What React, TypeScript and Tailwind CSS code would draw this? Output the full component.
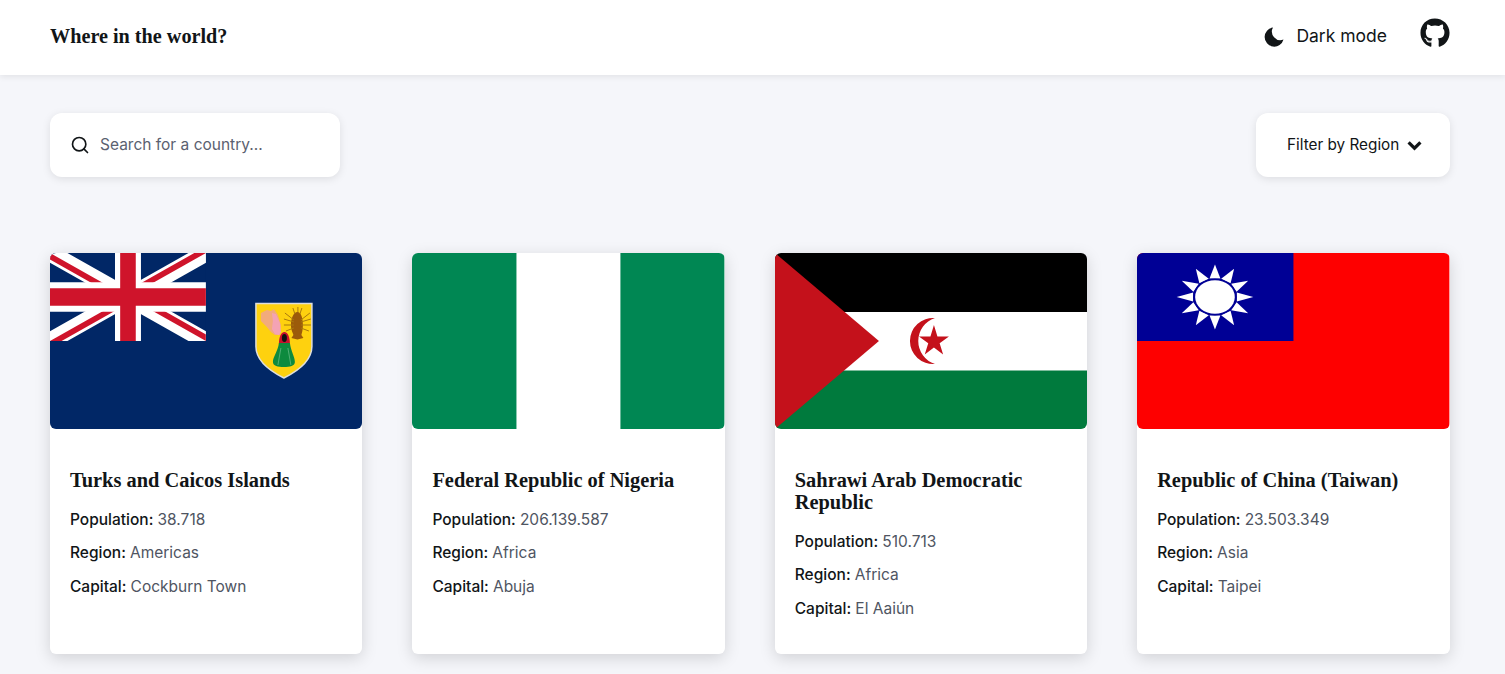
import { Search } from 'lucide-react';
import { FaGithub } from 'react-icons/fa';

const SERIF = "font-['Liberation_Serif',serif]";

function TurksFlag() {
  return (
    <svg viewBox="0 0 312.5 176" className="block w-full h-[176px]" preserveAspectRatio="none">
      <rect width="312.5" height="176" fill="#012766" />
      <svg x="0" y="0" width="156" height="88" viewBox="0 0 60 30" preserveAspectRatio="none">
        <clipPath id="canton">
          <path d="M30 15h30v15zv15h-30zh-30v-15zv-15h30z" />
        </clipPath>
        <path d="M0 0h60v30H0z" fill="#012766" />
        <path d="M0 0l60 30m0-30L0 30" stroke="#fff" strokeWidth="6" />
        <path d="M0 0l60 30m0-30L0 30" stroke="#cf142b" strokeWidth="4" clipPath="url(#canton)" />
        <path d="M30 0v30M0 15h60" stroke="#fff" strokeWidth="10" />
        <path d="M30 0v30M0 15h60" stroke="#cf142b" strokeWidth="6" />
      </svg>
      <path d="M206 50.500h56v43c0 14-13 24-28 31.500c-15-7.500-28-17.500-28-31.500z" fill="#fed10f" stroke="#ddd" strokeWidth="1.500" />
      {/* conch */}
      <path d="M211 60l6-3l4 1l3-2l4 6l3 10l-1 10l-5 0l-4-3l-4-5l-6-6z" fill="#f2ab7c" />
      <path d="M222 60l4 1l4 9l1 9l-2 3l-4-1l-3-5l1-8z" fill="#f4a3b4" />
      {/* lobster */}
      <path d="M247.500 59c4 0 5.500 7 5.500 13c0 5-1 8-1.500 10l2 3l-6 1.500l-6-1.500l2-3c-.5-2-2.500-5-2.500-10c0-6 2.500-13 6.500-13z" fill="#9c5b0a" />
      <path d="M235 60l9 7M234 66l10 3M234 72l10 0M236 78l8-3M260 60l-9 7M261 66l-10 3M261 72l-10 0M259 78l-8-3M243 55l2 6M248 54v5M252 55l-2 6" stroke="#a9780e" strokeWidth="1" fill="none" />
      {/* cactus */}
      <path d="M229 91c0-7 2-12 5.500-12s5.500 5 5.500 12z" fill="#c8102e" />
      <ellipse cx="234.500" cy="85" rx="2.500" ry="4" fill="#111" />
      <path d="M229 90h11c1 8 5 14 5 19c0 4-5 5-11 5s-11-1-11-5c0-5 5-11 6-19z" fill="#0d8a3e" />
      <path d="M231 95l-3 17M238 95l3 17" stroke="#6cc08a" strokeWidth="0.700" fill="none" />
    </svg>
  );
}

function NigeriaFlag() {
  return (
    <svg viewBox="0 0 312.5 176" className="block w-full h-[176px]" preserveAspectRatio="none">
      <rect width="312.5" height="176" fill="#008753" />
      <rect x="104.500" width="104" height="176" fill="#fff" />
    </svg>
  );
}

function SahrawiFlag() {
  return (
    <svg viewBox="0 0 312.5 176" className="block w-full h-[176px]" preserveAspectRatio="none">
      <rect width="312.5" height="59" fill="#000" />
      <rect y="59" width="312.5" height="58.500" fill="#fff" />
      <rect y="117.500" width="312.5" height="58.500" fill="#007a3d" />
      <path d="M0 0L104 88L0 176z" fill="#c4111b" />
      <path d="M160 65A23.080 23.080 0 1 0 160 111A24.200 24.200 0 0 1 160 65z" fill="#c4111b" />
      <path d="M159 72l3.500 11.500h11.500l-9.300 6.700l3.500 11.300l-9.200-7l-9.200 7l3.500-11.300l-9.300-6.700h11.500z" fill="#c4111b" />
    </svg>
  );
}

function TaiwanFlag() {
  const rays = Array.from({ length: 12 }, (_, i) => i * 30);
  return (
    <svg viewBox="0 0 312.5 176" className="block w-full h-[176px]" preserveAspectRatio="none">
      <rect width="312.5" height="176" fill="#fe0000" />
      <rect width="156.500" height="88" fill="#000095" />
      <g transform="translate(78 44) scale(1.180 1)">
        {rays.map((deg) => (
          <path key={deg} d="M-4.600 -18.500L0 -32.500L4.600 -18.500z" fill="#fff" transform={`rotate(${deg})`} />
        ))}
        <circle r="18.500" fill="#000095" />
        <circle r="16.800" fill="#fff" />
      </g>
    </svg>
  );
}

const COUNTRIES = [
  { name: 'Turks and Caicos Islands', population: '38.718', region: 'Americas', capital: 'Cockburn Town', flag: <TurksFlag /> },
  { name: 'Federal Republic of Nigeria', population: '206.139.587', region: 'Africa', capital: 'Abuja', flag: <NigeriaFlag /> },
  { name: 'Sahrawi Arab Democratic Republic', population: '510.713', region: 'Africa', capital: 'El Aaiún', flag: <SahrawiFlag /> },
  { name: 'Republic of China (Taiwan)', population: '23.503.349', region: 'Asia', capital: 'Taipei', flag: <TaiwanFlag /> },
];

export default function App() {
  return (
    <div className="min-h-screen bg-[#f5f6fa] text-[#111517] font-['Inter',sans-serif]">
      {/* Header */}
      <header className="h-[75px] bg-white shadow-[0_2px_6px_rgba(0,0,0,0.08)] flex items-center justify-between pl-[50px] pr-[55px] pb-[2px]">
        <h1 className={`${SERIF} text-[20.200px] font-bold`}>Where in the world?</h1>
        <div className="flex items-center">
          <svg viewBox="0 0 20 20" className="w-5 h-5 mr-[12px] mt-[1px]" fill="#111517">
            <path d="M9 0.500A9.600 9.600 0 1 0 19.500 12.500A8.500 8.500 0 0 1 9 0.500z" />
          </svg>
          <span className="text-[17.500px]">Dark mode</span>
          <FaGithub className="w-[30px] h-[30px] ml-[33px] -mt-[7px]" />
        </div>
      </header>

      <main className="pl-[50px] pr-[55px] pt-[38px] pb-5">
        {/* Search and filter */}
        <div className="flex justify-between">
          <div className="w-[290px] h-16 bg-white rounded-xl shadow-[0_2px_8px_rgba(0,0,0,0.1)] flex items-center pl-5">
            <Search className="w-5 h-5 mr-[10px]" strokeWidth={2} />
            <span className="text-[15.500px] text-[#5b6170]">Search for a country...</span>
          </div>
          <div className="w-[194px] h-16 bg-white rounded-xl shadow-[0_2px_8px_rgba(0,0,0,0.1)] flex items-center pl-[31px]">
            <span className="text-[15.300px]">Filter by Region</span>
            <svg viewBox="0 0 14 10" className="w-[15px] h-[11px] ml-[8px]" fill="none" stroke="#111517" strokeWidth="3">
              <path d="M1.500 2l5.500 5.500L12.500 2" />
            </svg>
          </div>
        </div>

        {/* Cards */}
        <div className="grid grid-cols-4 gap-[50px] mt-[76px] mr-[0.500px]">
          {COUNTRIES.map((c) => (
            <article key={c.name} className="bg-white rounded-md shadow-[0_4px_16px_rgba(0,0,0,0.15)]">
              <div className="rounded-md overflow-hidden">{c.flag}</div>
              <div className="px-5 pt-10 pb-[28px]">
                <h2 className={`${SERIF} text-[20.400px] leading-[22px] font-bold mb-3`}>{c.name}</h2>
                {[
                  ['Population', c.population],
                  ['Region', c.region],
                  ['Capital', c.capital],
                ].map(([label, value]) => (
                  <p key={label} className="text-[15.500px] leading-[22px] py-[5.750px] font-[450]">
                    {label}: <span className="font-normal text-[#4f5562]">{value}</span>
                  </p>
                ))}
              </div>
            </article>
          ))}
        </div>
      </main>
    </div>
  );
}
